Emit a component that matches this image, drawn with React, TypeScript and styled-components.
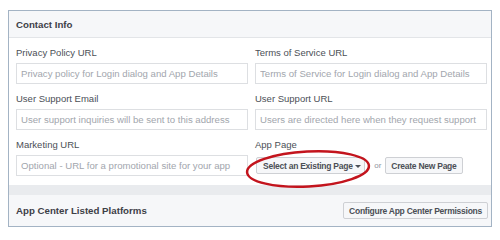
import React from "react";
import styled, { createGlobalStyle } from "styled-components";

const Global = createGlobalStyle`
  html, body { margin: 0; padding: 0; background: #ffffff; }
  body { font-family: "Liberation Sans", Arial, sans-serif; }
  * { box-sizing: border-box; }
`;

const Card = styled.section`
  position: relative;
  margin: 10px 0 0 8px;
  width: 484px;
  border: 1px solid #a3b3c4;
  background: #ffffff;
`;

const Header = styled.div`
  height: 27px;
  display: flex;
  align-items: center;
  padding: 0 7px;
  background: #f6f7f9;
  border-bottom: 1px solid #e3e5e8;
`;

const Title = styled.h2`
  margin: 0;
  font-size: 9.7px;
  font-weight: bold;
  color: #3d4047;
`;

const Body = styled.div`
  display: grid;
  grid-template-columns: 232px 232px;
  column-gap: 7px;
  row-gap: 8px;
  padding: 8px 4px 9px 7px;
`;

const Field = styled.div`
  display: flex;
  flex-direction: column;
`;

const Label = styled.label`
  font-size: 9.5px;
  line-height: 13px;
  color: #4b4f56;
  margin-bottom: 4px;
  white-space: nowrap;
`;

const Input = styled.input`
  height: 21px;
  width: 100%;
  margin: 0;
  padding: 0 4px;
  border: 1px solid #dddfe2;
  background: #ffffff;
  font-family: "Liberation Sans", Arial, sans-serif;
  font-size: 9.6px;
  color: #1d2129;
  outline: none;
  &::placeholder { color: #a2a6ad; }
`;

const ButtonRow = styled.div`
  height: 21px;
  display: flex;
  align-items: center;
  padding-left: 1px;
`;

const Button = styled.button<{ $padL?: number; $padR?: number }>`
  height: 17px;
  display: inline-flex;
  align-items: center;
  gap: 2.5px;
  margin: 0;
  padding: 0 ${(p) => p.$padR ?? 5}px 0 ${(p) => p.$padL ?? 5}px;
  border: 1px solid #ced0d4;
  border-radius: 2px;
  background: #f6f7f9;
  font-family: "Liberation Sans", Arial, sans-serif;
  font-size: 8.5px;
  letter-spacing: -0.25px;
  font-weight: bold;
  color: #4b4f56;
  white-space: nowrap;
  cursor: pointer;
`;

const Caret = styled.span`
  width: 0;
  height: 0;
  border-left: 3px solid transparent;
  border-right: 3px solid transparent;
  border-top: 3.5px solid #4b4f56;
  margin-top: 1px;
`;

const Or = styled.span`
  font-size: 8px;
  color: #90949c;
  margin: 0 4px 0 9px;
`;

const Band = styled.div`
  height: 10px;
  background: #e9ebee;
`;

const Footer = styled.div`
  height: 31px;
  display: flex;
  align-items: center;
  justify-content: space-between;
  padding: 0 3px 0 7px;
  background: #f6f7f9;
`;

const Circle = styled.svg`
  position: absolute;
  left: 235px;
  top: 137px;
  pointer-events: none;
`;

export default function App() {
  return (
    <>
      <Global />
      <Card>
        <Header>
          <Title>Contact Info</Title>
        </Header>
        <Body>
          <Field>
            <Label>Privacy Policy URL</Label>
            <Input placeholder="Privacy policy for Login dialog and App Details" />
          </Field>
          <Field>
            <Label>Terms of Service URL</Label>
            <Input placeholder="Terms of Service for Login dialog and App Details" />
          </Field>
          <Field>
            <Label>User Support Email</Label>
            <Input placeholder="User support inquiries will be sent to this address" />
          </Field>
          <Field>
            <Label>User Support URL</Label>
            <Input placeholder="Users are directed here when they request support" />
          </Field>
          <Field>
            <Label>Marketing URL</Label>
            <Input placeholder="Optional - URL for a promotional site for your app" />
          </Field>
          <Field>
            <Label>App Page</Label>
            <ButtonRow>
              <Button $padL={6} $padR={3}>
                Select an Existing Page
                <Caret />
              </Button>
              <Or>or</Or>
              <Button>Create New Page</Button>
            </ButtonRow>
          </Field>
        </Body>
        <Band />
        <Footer>
          <Title>App Center Listed Platforms</Title>
          <Button>Configure App Center Permissions</Button>
        </Footer>
        <Circle width="128" height="42" viewBox="0 0 128 42">
          <ellipse
            cx="64"
            cy="21"
            rx="61"
            ry="17.5"
            fill="none"
            stroke="#c3141d"
            strokeWidth="2.5"
            transform="rotate(-3 64 21)"
          />
        </Circle>
      </Card>
    </>
  );
}
